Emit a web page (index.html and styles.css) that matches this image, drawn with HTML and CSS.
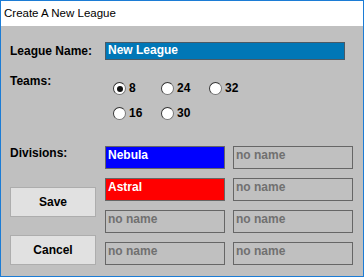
FILE: index.html
```html
<!DOCTYPE html>
<html>
<head>
<meta charset="utf-8">
<link rel="stylesheet" href="styles.css">
</head>
<body>
<div class="window">
  <div class="titlebar">Create A New League</div>
  <div class="content">
    <div class="name-row">
      <div class="label name-label">League Name:</div>
      <div class="name-input">New League</div>
    </div>
    <div class="teams">
      <div class="label teams-label">Teams:</div>
      <div class="radios">
        <div class="radio"><span class="circle checked"></span><span>8</span></div>
        <div class="radio"><span class="circle"></span><span>24</span></div>
        <div class="radio"><span class="circle"></span><span>32</span></div>
        <div class="radio"><span class="circle"></span><span>16</span></div>
        <div class="radio"><span class="circle"></span><span>30</span></div>
      </div>
    </div>
    <div class="divisions">
      <div class="left-col">
        <div class="label">Divisions:</div>
        <div class="btn save">Save</div>
        <div class="btn cancel">Cancel</div>
      </div>
      <div class="div-grid">
        <div class="box blue">Nebula</div>
        <div class="box empty">no name</div>
        <div class="box red">Astral</div>
        <div class="box empty">no name</div>
        <div class="box empty">no name</div>
        <div class="box empty">no name</div>
        <div class="box empty">no name</div>
        <div class="box empty">no name</div>
      </div>
    </div>
  </div>
</div>
</body>
</html>
```
FILE: styles.css
```css
* { box-sizing: border-box; }
html, body { margin: 0; padding: 0; }
body {
  font-family: "Liberation Sans", Arial, sans-serif;
  width: 364px;
  height: 277px;
  overflow: hidden;
}
.window {
  width: 364px;
  height: 277px;
  border: 1px solid #1c7cd5;
  background: #c0c0c0;
}
.titlebar {
  height: 25px;
  background: #ffffff;
  color: #000;
  font-size: 11.5px;
  line-height: 25px;
  padding-left: 3px;
}
.content {
  padding: 16px 0 0 9px;
}
.label {
  font-size: 12px;
  font-weight: bold;
  line-height: 14px;
  color: #000;
}
.name-row {
  display: flex;
  align-items: center;
  height: 18px;
}
.name-label { width: 95px; }
.name-input {
  width: 240px;
  height: 18px;
  background: #0077b7;
  border: 1px solid #4a5a66;
  color: #fff;
  font-size: 12px;
  font-weight: bold;
  line-height: 15px;
  padding-left: 2px;
}
.teams {
  display: flex;
  margin-top: 14px;
}
.teams-label { width: 103px; }
.radios {
  margin-top: 8px;
  display: grid;
  grid-template-columns: repeat(3, 48px);
  row-gap: 12px;
}
.radio {
  display: flex;
  align-items: center;
  gap: 3px;
  height: 13px;
  font-size: 12px;
  font-weight: bold;
  line-height: 13px;
}
.circle {
  width: 13px;
  height: 13px;
  border-radius: 50%;
  border: 1px solid #333;
  border-right-color: #777;
  border-bottom-color: #777;
  background: #fff;
  display: flex;
  align-items: center;
  justify-content: center;
}
.circle.checked::after {
  content: "";
  width: 6px;
  height: 6px;
  border-radius: 50%;
  background: #111;
}
.divisions {
  display: flex;
  margin-top: 26px;
}
.left-col {
  width: 95px;
  display: flex;
  flex-direction: column;
}
.btn {
  width: 86px;
  height: 30px;
  background: #e1e1e1;
  border: 1px solid #adadad;
  font-size: 12px;
  font-weight: bold;
  display: flex;
  align-items: center;
  justify-content: center;
  color: #000;
}
.save { margin-top: 27px; }
.cancel { margin-top: 18px; }
.div-grid {
  display: grid;
  grid-template-columns: 120px 120px;
  grid-auto-rows: 23px;
  column-gap: 8px;
  row-gap: 9px;
}
.box {
  border: 1px solid #666;
  font-size: 12px;
  font-weight: bold;
  line-height: 14px;
  padding: 1px 0 0 2px;
}
.blue { background: #0000ff; color: #fff; }
.red { background: #ff0000; color: #fff; }
.empty { color: #707070; }
```
